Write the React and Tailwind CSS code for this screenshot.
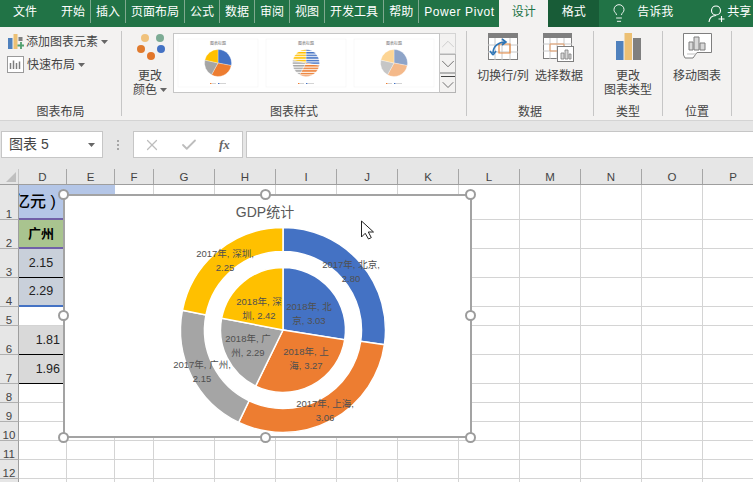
import { Lightbulb, X, Check, ChevronUp, ChevronDown } from "lucide-react";

const tabs = ["开始", "插入", "页面布局", "公式", "数据", "审阅", "视图", "开发工具", "帮助", "Power Pivot"];
const colNames = ["D", "E", "F", "G", "H", "I", "J", "K", "L", "M", "N", "O", "P"];
const rowHeights = ["h-[35px]", "h-[29px]", "h-[29px]", "h-[29px]", "h-[19px]", "h-[29px]", "h-[29px]", "h-[19px]", "h-[19px]", "h-[19px]", "h-[19px]", "h-[19px]", "h-[19px]"];

// column D cells, by row index
const dCells = {
  0: { cls: "bg-[#b4c6e7] border-b-2 border-b-[#7060a8] text-[16px] font-medium text-black", text: "亿元 )", clip: true },
  1: { cls: "bg-[#a9c48f] border-b-2 border-b-[#7060a8] justify-center text-[13px] font-bold text-black pr-[4px]", text: "广州" },
  2: { cls: "bg-[#c9d0da] border-b border-b-black justify-center text-[12.5px] text-[#222] pr-[4px]", text: "2.15" },
  3: { cls: "bg-[#c9d0da] border-b-2 border-b-[#4472c4] justify-center text-[12.5px] text-[#222] pr-[4px]", text: "2.29" },
  5: { cls: "bg-[#d9d9d9] border-b border-b-black justify-end text-[12.5px] text-[#222] pr-[7px]", text: "1.81" },
  6: { cls: "bg-[#d9d9d9] border-b border-b-black justify-end text-[12.5px] text-[#222] pr-[7px]", text: "1.96" },
};

const handles = [
  "left-[58px] top-[20px]", "left-[260px] top-[20px]", "left-[465px] top-[20px]",
  "left-[58px] top-[141px]", "left-[465px] top-[141px]",
  "left-[58px] top-[263px]", "left-[260px] top-[263px]", "left-[465px] top-[263px]",
];

const colors = ["#4472c4", "#ed7d31", "#a5a5a5", "#ffc000"];

function polar(cx, cy, r, deg) {
  const a = ((deg - 90) * Math.PI) / 180;
  return [cx + r * Math.cos(a), cy + r * Math.sin(a)];
}

// ring or pie slice path; r0 = 0 gives a wedge
function slicePath(cx, cy, r0, r1, from, to) {
  const large = to - from > 180 ? 1 : 0;
  const [x1, y1] = polar(cx, cy, r1, from);
  const [x2, y2] = polar(cx, cy, r1, to);
  if (r0 === 0) return `M${cx} ${cy}L${x1} ${y1}A${r1} ${r1} 0 ${large} 1 ${x2} ${y2}Z`;
  const [x3, y3] = polar(cx, cy, r0, to);
  const [x4, y4] = polar(cx, cy, r0, from);
  return `M${x1} ${y1}A${r1} ${r1} 0 ${large} 1 ${x2} ${y2}L${x3} ${y3}A${r0} ${r0} 0 ${large} 0 ${x4} ${y4}Z`;
}

function slices(values) {
  const total = values.reduce((a, b) => a + b, 0);
  let at = 0;
  return values.map((v) => {
    const from = at;
    at += (v / total) * 360;
    return [from, at];
  });
}

const labels = [
  [351, 268, "2017年, 北京,"], [351, 282, "2.80"],
  [325, 407, "2017年, 上海,"], [325, 421, "3.06"],
  [202, 368, "2017年, 广州,"], [202, 382, "2.15"],
  [225, 257, "2017年, 深圳,"], [225, 271, "2.25"],
  [309, 310, "2018年, 北"], [309, 324, "京, 3.03"],
  [306, 355, "2018年, 上"], [306, 369, "海, 3.27"],
  [248, 342, "2018年, 广"], [248, 356, "州, 2.29"],
  [259, 305, "2018年, 深"], [259, 319, "圳, 2.42"],
];

function Caret() {
  return (
    <svg width="7" height="4" viewBox="0 0 7 4" className="shrink-0">
      <path d="M0 0H7L3.5 4Z" fill="#666" />
    </svg>
  );
}

function Thumb({ cx, fills, title, opacity = 1 }) {
  const cuts = slices([3, 3.2, 2.2, 2.3]);
  return (
    <g>
      <rect x={cx - 40} y="39" width="80" height="48" fill="#fff" stroke="#f4f4f4" strokeWidth="0.6" />
      <text x={cx} y="45" textAnchor="middle" className="text-[4px] fill-[#777]">{title}</text>
      {cuts.map(([a, b], i) => (
        <path key={i} d={slicePath(cx, 63, 0, 13.5, a, b)} fill={fills[i]} opacity={opacity} stroke="#fff" strokeWidth="0.3" />
      ))}
      <rect x={cx - 8} y="83" width="1.5" height="1" fill="#ed7d31" />
      <rect x={cx - 6} y="83" width="4" height="1" fill="#d4d4d4" />
      <rect x={cx} y="83" width="1.5" height="1" fill="#4472c4" />
      <rect x={cx + 2} y="83" width="6" height="1" fill="#d4d4d4" />
    </g>
  );
}

function Gallery() {
  return (
    <div className="flex mt-[2px] h-[60px] w-[283px] border border-[#c6c6c6] bg-white ml-[3px]">
      <svg width="265" height="58" viewBox="174 34 265 58" className="shrink-0">
        <defs>
          {colors.map((c, i) => (
            <pattern key={c} id={`stripe${i}`} width="3" height="2.6" patternUnits="userSpaceOnUse">
              <rect width="3" height="2.6" fill="#fff" />
              <rect width="3" height="1.5" fill={c} />
            </pattern>
          ))}
        </defs>
        <Thumb cx={218} fills={colors} title="图表标题" />
        <Thumb cx={306} fills={["url(#stripe0)", "url(#stripe1)", "url(#stripe2)", "url(#stripe3)"]} title="图表标题" />
        <Thumb cx={394} fills={["#8ea4c8", "#f4b98a", "#c6c6c6", "#fdd594"]} title="图表标题" />
      </svg>
      <div className="flex flex-col w-[17px] -my-px -mr-px border-l border-[#c6c6c6] bg-[#f3f2f1]">
        <div className="h-[21px] flex items-center justify-center border-y border-r border-[#d4d4d4]">
          <ChevronUp size={22} strokeWidth={0.8} className="shrink-0 text-[#c0c0c0]" />
        </div>
        <div className="h-[19px] flex items-center justify-center border-y border-r border-[#b4b4b4]">
          <ChevronDown size={22} strokeWidth={0.8} className="shrink-0 text-[#444]" />
        </div>
        <div className="h-[20px] flex flex-col items-center border-y border-r border-[#b4b4b4] overflow-hidden">
          <div className="w-[14px] h-px shrink-0 bg-[#444] mt-[2px]" />
          <ChevronDown size={20} strokeWidth={0.9} className="shrink-0 -mt-[2px] text-[#444]" />
        </div>
      </div>
    </div>
  );
}

function Group({ w, label, children }) {
  return (
    <div className={`flex flex-col h-[85px] border-r border-[#c6c6c6] shrink-0 ${w}`}>
      <div className="flex-1 flex min-h-0">{children}</div>
      <div className="text-[12px] leading-[16px] text-[#444] text-center -mb-[4px]">{label}</div>
    </div>
  );
}

function BigButton({ w, icon, lines, caret }) {
  return (
    <div className={`flex flex-col items-center pt-[2px] shrink-0 ${w}`}>
      <div className="h-[36px] flex items-start justify-center">{icon}</div>
      {lines.map((line, i) => (
        <div key={line} className="flex items-center gap-[3px] text-[12px] leading-[14px] text-[#444] whitespace-nowrap">
          {line}
          {caret && i === lines.length - 1 && <Caret />}
        </div>
      ))}
    </div>
  );
}

const colorIcon = (
  <svg width="30" height="30" viewBox="0 0 30 30">
    <circle cx="10" cy="5" r="4" fill="#f0c27c" />
    <circle cx="25" cy="5" r="4" fill="#7cab94" />
    <circle cx="6" cy="16" r="4" fill="#e07b2e" />
    <circle cx="26" cy="16" r="4" fill="#4472c4" />
    <circle cx="16" cy="23" r="4" fill="#e2762a" />
  </svg>
);

const switchIcon = (
  <svg width="30" height="27" viewBox="0 0 30 27">
    <rect x="0.5" y="0.5" width="29" height="26" fill="#fff" stroke="#7f7f7f" />
    <rect width="30" height="5" fill="#7f7f7f" />
    <path d="M0 12H30M0 19H30M7 5V27M14 5V27M22 5V27" stroke="#c8c8c8" />
    <path d="M11 11H22V20H11Z" fill="none" stroke="#e8883e" strokeWidth="1.2" />
    <path d="M5 20C5 13 11 9 17 9M14 6L18 9L14 12M5 22L2 18M5 22L8 18" fill="none" stroke="#2e75b6" strokeWidth="1.6" />
  </svg>
);

const selectIcon = (
  <svg width="32" height="30" viewBox="0 0 32 30">
    <rect x="0.5" y="0.5" width="28" height="25" fill="#fff" stroke="#7f7f7f" />
    <rect width="29" height="5" fill="#7f7f7f" />
    <path d="M0 11H29M0 18H29M7 5V26M14 5V26M21 5V26" stroke="#c8c8c8" />
    <path d="M7 11H21V18H7Z" fill="none" stroke="#e8a06a" />
    <rect x="14.5" y="13.5" width="16" height="15" fill="#fff" stroke="#7f7f7f" />
    <path d="M18 26V20H21V26ZM22 26V17H25V26ZM26 26V21H28V26Z" fill="#d9d9d9" stroke="#7f7f7f" strokeWidth="0.8" />
  </svg>
);

const typeIcon = (
  <svg width="25" height="27" viewBox="0 0 25 27">
    <rect x="0" y="8" width="7.5" height="19" fill="#4f81bd" />
    <rect x="8.5" y="0" width="7.5" height="27" fill="#ecc074" />
    <rect x="17" y="5" width="8" height="22" fill="#7f7f7f" />
  </svg>
);

const moveIcon = (
  <svg width="29" height="26" viewBox="0 0 29 26">
    <path d="M0.5 0.5H28.5V19.5H14L10 25H2L0.5 22Z" fill="#fff" stroke="#7f7f7f" />
    <path d="M6 17V9H10V17ZM11 17V4H16V17ZM17 17V10H22V17Z" fill="#d9d9d9" stroke="#7f7f7f" />
    <path d="M4 21H13" stroke="#bfbfbf" />
  </svg>
);

export default function App() {
  const outer = slices([2.8, 3.06, 2.15, 2.25]);
  const inner = slices([3.03, 3.27, 2.29, 2.42]);

  return (
    <div className="w-[753px] h-[482px] overflow-hidden bg-white font-['Liberation_Sans','Noto_Sans_CJK_SC',sans-serif]">
      {/* tabs */}
      <div className="h-[27px] bg-[#217346] flex text-white text-[12px] leading-[24px]">
        <div className="w-[56px] pl-[13px]">文件</div>
        {tabs.map((t) => (
          <div key={t} className="flex items-start">
            <div className={t === "Power Pivot" ? "pl-[5px] tracking-[0.6px] w-[79px] whitespace-nowrap" : "px-[5px] whitespace-nowrap"}>{t}</div>
            {t !== "Power Pivot" && <div className="w-px h-[23px] bg-[#7fa98f]" />}
          </div>
        ))}
        <div className="w-[49px] ml-px bg-[#f3f2f1] text-[#217346] text-center">设计</div>
        <div className="w-[51px] bg-[#185c37] text-center">格式</div>
        <Lightbulb size={20} strokeWidth={1.1} className="ml-[10px] mt-[3px] text-white" />
        <div className="ml-[8px]">告诉我</div>
        <svg width="18" height="18" viewBox="0 0 18 18" className="ml-[35px] mt-[5px]" fill="none" stroke="#fff" strokeWidth="1.1">
          <circle cx="8" cy="5.5" r="4.5" />
          <path d="M1 17C1.5 12.5 4 10.5 8 10.5M13.5 11V17M10.5 14H16.5" />
        </svg>
        <div className="ml-[1px] whitespace-nowrap">共享</div>
      </div>

      {/* ribbon */}
      <div className="h-[94px] bg-[#f3f2f1] border-b border-[#d4d4d4] pt-[4px] flex">
        <Group w="w-[122px]" label="图表布局">
          <div className="pl-[7px] pt-[2px] text-[12px] text-[#444] flex flex-col gap-[6px]">
            <div className="flex items-center h-[17px] whitespace-nowrap">
              <svg width="16" height="16" viewBox="0 0 16 16" className="ml-[1px] mr-[2px]">
                <rect x="0" y="4" width="4.5" height="11" fill="#4f81bd" />
                <rect x="5.5" y="0" width="4" height="15" fill="#ecc074" />
                <rect x="10.5" y="3" width="4" height="4" fill="#7f7f7f" />
                <path d="M13 8V15M9.5 11.5H16" stroke="#4fa06f" strokeWidth="1.8" />
              </svg>
              添加图表元素
              <span className="ml-[3px]"><Caret /></span>
            </div>
            <div className="flex items-center h-[17px] whitespace-nowrap">
              <svg width="17" height="17" viewBox="0 0 17 17" className="mr-[3px]">
                <rect x="0.5" y="0.5" width="16" height="16" fill="#fff" stroke="#9a9a9a" />
                <path d="M3.5 13V7M6.5 13V4.5M9.5 13V7M12.5 13V5.5" stroke="#7f7f7f" strokeWidth="1.5" />
              </svg>
              快速布局
              <span className="ml-[3px]"><Caret /></span>
            </div>
          </div>
        </Group>
        <Group w="w-[345px]" label="图表样式">
          <div className="flex pl-[8px]">
            <BigButton w="w-[40px]" icon={colorIcon} lines={["更改", "颜色"]} caret />
            <Gallery />
          </div>
        </Group>
        <Group w="w-[127px]" label="数据">
          <div className="flex pl-[8px]">
            <BigButton w="w-[56px]" icon={switchIcon} lines={["切换行/列"]} />
            <BigButton w="w-[56px]" icon={selectIcon} lines={["选择数据"]} />
          </div>
        </Group>
        <Group w="w-[69px]" label="类型">
          <BigButton w="w-full" icon={typeIcon} lines={["更改", "图表类型"]} />
        </Group>
        <Group w="w-[69px]" label="位置">
          <BigButton w="w-full" icon={moveIcon} lines={["移动图表"]} />
        </Group>
      </div>

      {/* formula bar */}
      <div className="h-[48px] bg-[#e6e6e6] pt-[10px] flex">
        <div className="ml-[1px] w-[102px] h-[27px] bg-white border border-[#c6c6c6] flex items-center justify-between pl-[7px] pr-[7px] text-[14px] text-[#444]">
          图表 5
          <Caret />
        </div>
        <div className="w-[30px] h-[27px] flex items-center justify-center">
          <div className="flex flex-col gap-[2px]">
            <div className="w-[2px] h-[2px] bg-[#a6a6a6]" />
            <div className="w-[2px] h-[2px] bg-[#a6a6a6]" />
            <div className="w-[2px] h-[2px] bg-[#a6a6a6]" />
          </div>
        </div>
        <div className="w-[110px] h-[27px] bg-white border border-[#c6c6c6] flex items-center pl-[9px] text-[#bdbdbd]">
          <X size={18} strokeWidth={1.6} />
          <Check size={18} strokeWidth={2.4} className="ml-[19px]" />
          <span className="ml-[21px] font-['Liberation_Serif',serif] italic font-bold text-[13px] text-[#666]">fx</span>
        </div>
        <div className="ml-[3px] flex-1 h-[27px] bg-white border-y border-l border-[#c6c6c6]" />
      </div>

      {/* sheet */}
      <div className="relative h-[313px] overflow-hidden">
        <div className="flex h-[16px] bg-[#e6e6e6] border-b border-[#9e9e9e] text-[11.5px] leading-[15px] text-[#444]">
          <div className="w-[19px] shrink-0 border-r border-[#c6c6c6] flex items-end justify-end pr-[2px] pb-[2px]">
            <svg width="10" height="10" viewBox="0 0 10 10"><path d="M10 0V10H0Z" fill="#bfbfbf" /></svg>
          </div>
          {colNames.map((c, i) => (
            <div
              key={c}
              className={`${i < 2 ? "w-[48px]" : i === 2 ? "w-[39px]" : "w-[61px]"} shrink-0 pt-[1px] text-center border-r border-[#a6a6a6]`}
            >
              {c}
            </div>
          ))}
        </div>
        {rowHeights.map((h, r) => (
          <div key={r} className={`flex ${h}`}>
            <div className="w-[19px] shrink-0 bg-[#e6e6e6] border-r border-b border-r-[#9e9e9e] border-b-[#b0b0b0] flex items-end justify-center text-[11.5px] leading-[9px] text-[#444]">
              {r < 12 ? r + 1 : ""}
            </div>
            {colNames.map((c, i) => {
              const cell = i === 0 ? dCells[r] : null;
              const w = i < 2 ? "w-[48px]" : i === 2 ? "w-[39px]" : "w-[61px]";
              if (cell) {
                return (
                  <div key={c} className={`${w} shrink-0 flex items-center overflow-hidden whitespace-nowrap ${cell.cls}`}>
                    {cell.clip ? <span className="-ml-[5px]">{cell.text}</span> : cell.text}
                  </div>
                );
              }
              const blue = r === 0 && i === 1;
              return <div key={c} className={`${w} shrink-0 border-b border-[#d4d4d4] ${blue ? "bg-[#b4c6e7]" : "border-r"}`} />;
            })}
          </div>
        ))}

        {/* chart over the cells */}
        <div className="absolute left-[63px] top-[25px] w-[409px] h-[244px] bg-white border-2 border-[#a3a3a3]">
          <svg width="405" height="240" viewBox="65 196 405 240" className="block">
            <text x="265" y="217" textAnchor="middle" className="text-[14px] fill-[#595959]">GDP统计</text>
            {outer.map(([a, b], i) => (
              <path key={i} d={slicePath(283, 330, 78.5, 102.5, a, b)} fill={colors[i]} stroke="#fff" strokeWidth="1.5" />
            ))}
            {inner.map(([a, b], i) => (
              <path key={i} d={slicePath(283, 330, 0, 62.5, a, b)} fill={colors[i]} stroke="#fff" strokeWidth="1.5" />
            ))}
            {labels.map(([x, y, t]) => (
              <text key={t} x={x} y={y} textAnchor="middle" className="text-[9.5px] fill-[#505050]">{t}</text>
            ))}
            <path d="M361.5 221V237L365.2 233.3L368.5 239L371.3 237.6L368.3 232H373.5Z" fill="#fff" stroke="#222" strokeWidth="1" />
          </svg>
        </div>
        {handles.map((pos) => (
          <div key={pos} className={`absolute w-[11px] h-[11px] rounded-full bg-white border-2 border-[#9c9c9c] ${pos}`} />
        ))}
      </div>
    </div>
  );
}
